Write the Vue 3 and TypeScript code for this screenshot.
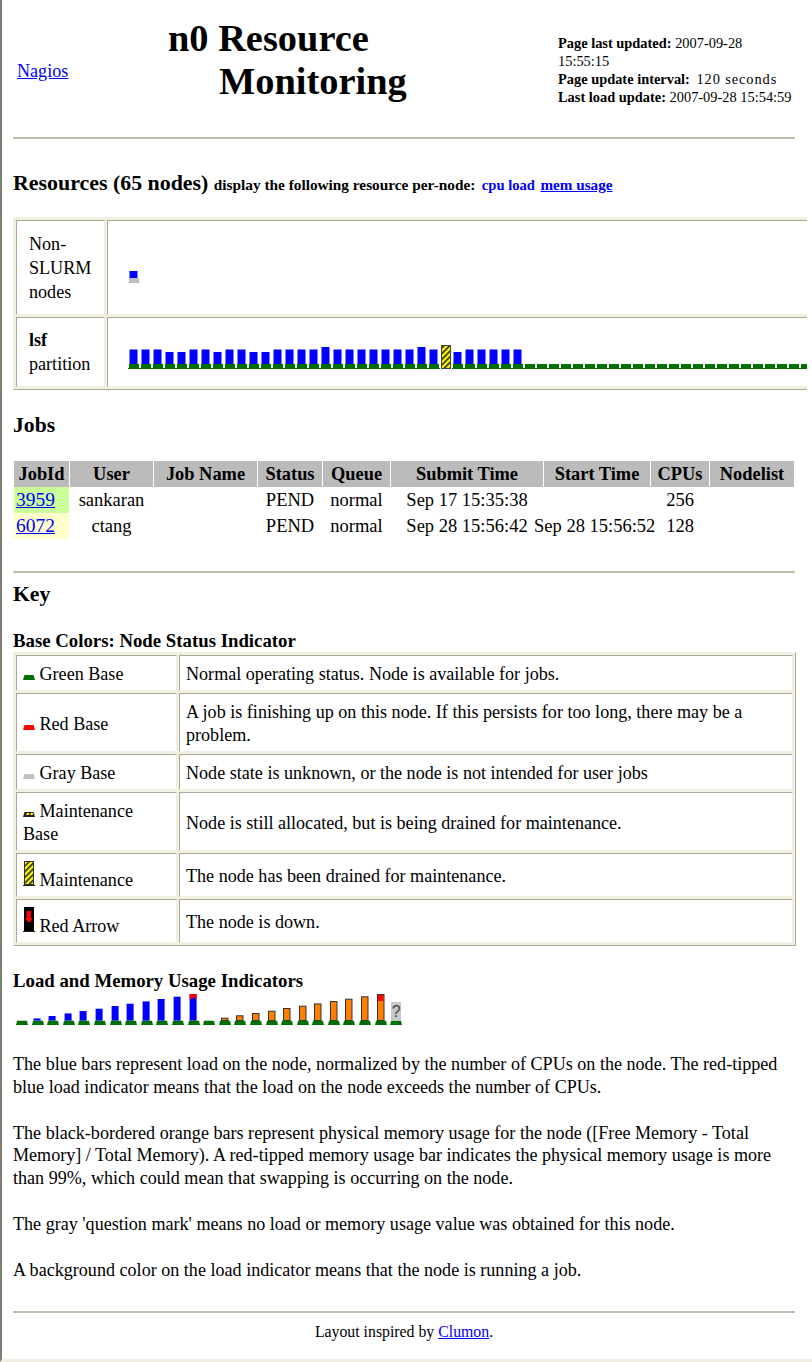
<script setup lang="ts">
type Kind = 'T' | 'S' | 'H' | 'M' | 'E';
const head = 'TTTSSTTSTTSSTTTTHTTTTTTTHTMSTTTTT';
const lsf: Kind[] = [...(head.split('') as Kind[]), ...Array<Kind>(26).fill('E')];
const heights: Record<string, number> = { T: 14.5, S: 12, H: 17 };
const load = [0, 2.3, 4.7, 7.3, 9.7, 12, 14.7, 17, 19.3, 21.7, 24, 26.7];
const mem = [0, 2.3, 4.7, 7, 9.3, 12, 14.3, 16.6, 19, 21.3, 23.7, 26];
const cols = ['JobId', 'User', 'Job Name', 'Status', 'Queue', 'Submit Time', 'Start Time', 'CPUs', 'Nodelist'];
const basePath = 'M1 21H11V25H12V26H0V25H1Z';
const legendBase = 'M1 27.7H11L12 32H0Z';
const iconBase = 'M1.5 0H10.5L12 5H0Z';
</script>

<template>
  <div class="page">
    <header class="top">
      <a class="nagios" href="#">Nagios</a>
      <h1 class="title"><span class="t1">n0 Resource</span><span class="t2">Monitoring</span></h1>
      <div class="meta">
        <b>Page last updated:</b> 2007-09-28<br />15:55:15<br />
        <b>Page update interval:</b> <span class="wide">120 seconds</span><br />
        <b>Last load update:</b> 2007-09-28 15:54:59
      </div>
    </header>
    <hr class="rule" />
    <h2 class="res">Resources (65 nodes) <small>display the following resource per-node:</small> <span class="sel">cpu load</span> <a class="lnk" href="#">mem usage</a></h2>

    <div class="clip">
      <table class="grid res-table">
        <tbody>
          <tr class="r1">
            <td class="lab">Non-SLURM nodes</td>
            <td class="nodes">
              <div class="row single">
                <svg width="12" height="12" class="node"><rect x="1.5" y="0" width="8" height="7" fill="#0000ff" /><path d="M1 7H11V11H12V12H0V11H1Z" fill="#c0c0c0" /></svg>
              </div>
            </td>
          </tr>
          <tr class="r2">
            <td class="lab"><b>lsf</b><br />partition</td>
            <td class="nodes">
              <div class="row">
                <svg v-for="(k, i) in lsf" :key="i" width="12" height="26" class="node">
                  <template v-if="k === 'M'">
                    <defs><pattern id="hatch" width="4" height="4" patternUnits="userSpaceOnUse" patternTransform="rotate(45)"><rect width="4" height="4" fill="#ffff00" /><rect width="1.6" height="4" fill="#222" /></pattern></defs>
                    <rect x="1.5" y="2.5" width="9" height="23" fill="url(#hatch)" stroke="#444" />
                  </template>
                  <template v-else>
                    <rect v-if="k !== 'E'" x="1.5" :y="21 - heights[k]" width="8" :height="heights[k]" fill="#0000ff" />
                    <path :d="basePath" fill="#007000" />
                  </template>
                </svg>
              </div>
            </td>
          </tr>
        </tbody>
      </table>
    </div>

    <h2 class="sec jobs-h">Jobs</h2>
    <table class="jobs">
      <thead>
        <tr><th v-for="c in cols" :key="c">{{ c }}</th></tr>
      </thead>
      <tbody>
        <tr>
          <td class="id green"><a href="#">3959</a></td><td class="c">sankaran</td><td></td><td class="c">PEND</td><td class="c">normal</td><td class="c">Sep 17 15:35:38</td><td class="c"></td><td class="c">256</td><td></td>
        </tr>
        <tr>
          <td class="id yellow"><a href="#">6072</a></td><td class="c">ctang</td><td></td><td class="c">PEND</td><td class="c">normal</td><td class="c">Sep 28 15:56:42</td><td class="start"><span>Sep 28 15:56:52</span></td><td class="c">128</td><td></td>
        </tr>
      </tbody>
    </table>
    <hr class="rule second" />
    <h2 class="sec key-h">Key</h2>
    <h3 class="sub">Base Colors: Node Status Indicator</h3>
    <table class="grid key">
      <tbody>
        <tr><td class="k"><svg width="12" height="5" class="ic"><path :d="iconBase" fill="#007000" /></svg> Green Base</td><td>Normal operating status. Node is available for jobs.</td></tr>
        <tr><td class="k"><svg width="12" height="5" class="ic"><path :d="iconBase" fill="#ff0000" /></svg> Red Base</td><td>A job is finishing up on this node. If this persists for too long, there may be a problem.</td></tr>
        <tr><td class="k"><svg width="12" height="5" class="ic"><path :d="iconBase" fill="#c0c0c0" /></svg> Gray Base</td><td>Node state is unknown, or the node is not intended for user jobs</td></tr>
        <tr><td class="k"><svg width="12" height="5" class="ic"><path :d="iconBase" fill="#222" /><path d="M4 1H6.5L5.5 3H3ZM8 1H10.5L9.5 3H7Z" fill="#ffff00" /></svg> Maintenance Base</td><td>Node is still allocated, but is being drained for maintenance.</td></tr>
        <tr><td class="k"><svg width="12" height="25" class="ic"><defs><pattern id="hatch2" width="4" height="4" patternUnits="userSpaceOnUse" patternTransform="rotate(45)"><rect width="4" height="4" fill="#ffff00" /><rect width="1.6" height="4" fill="#222" /></pattern></defs><rect x="1.5" y=".5" width="9" height="23" fill="url(#hatch2)" stroke="#333" /><rect y="24" width="12" height="1" fill="#222" /></svg> Maintenance</td><td>The node has been drained for maintenance.</td></tr>
        <tr><td class="k"><svg width="12" height="25" class="ic"><rect x="1" width="10" height="24" fill="#000" /><rect y="24" width="12" height="1" fill="#222" /><path d="M3.5 4H8V11H10L5.8 16L1.8 11H3.5Z" fill="#ff0000" /></svg> Red Arrow</td><td>The node is down.</td></tr>
      </tbody>
    </table>

    <h3 class="sub load-h">Load and Memory Usage Indicators</h3>
    <div class="legend">
      <svg v-for="(h, i) in load" :key="'l' + i" width="15.6" height="32" class="node">
        <rect v-if="h" x="1.6" :y="27.7 - h" width="7" :height="h" fill="#0000ff" />
        <path v-if="i === 11" d="M1.6 1H8.6V7L5.1 4L1.6 7Z" fill="#ff0000" />
        <path :d="legendBase" fill="#007000" />
      </svg>
      <svg v-for="(h, i) in mem" :key="'m' + i" width="15.6" height="32" class="node">
        <rect v-if="h" x="2.5" :y="27.5 - h" width="6.5" :height="h" fill="#ff8000" stroke="#333" />
        <rect v-if="i === 11" x="3" y="2" width="5.5" height="6" fill="#ff0000" />
        <path :d="legendBase" fill="#007000" />
      </svg>
      <div class="q">
        <span>?</span>
        <svg width="12" height="4.3" class="node"><path d="M1 0H11L12 4.3H0Z" fill="#007000" /></svg>
      </div>
    </div>

    <p class="para">The blue bars represent load on the node, normalized by the number of CPUs on the node. The red-tipped blue load indicator means that the load on the node exceeds the number of CPUs.</p>
    <p class="para">The black-bordered orange bars represent physical memory usage for the node ([Free Memory - Total Memory] / Total Memory). A red-tipped memory usage bar indicates the physical memory usage is more than 99%, which could mean that swapping is occurring on the node.</p>
    <p class="para">The gray 'question mark' means no load or memory usage value was obtained for this node.</p>
    <p class="para">A background color on the load indicator means that the node is running a job.</p>
    <hr class="rule third" />
    <p class="foot">Layout inspired by <a href="#">Clumon</a>.</p>
  </div>
</template>

<style>
html, body { margin: 0; padding: 0; background: #fff; overflow: hidden; }
</style>

<style scoped>
.page {
  box-sizing: border-box;
  width: 812px;
  height: 1362px;
  overflow: hidden;
  padding: 0 17px 0 11px;
  border-left: 2px solid #807f74;
  border-bottom: 3px solid #f1efe2;
  font: 18.1px/23px "Liberation Serif", serif;
  color: #000;
  background: #fff;
}
a { color: #0000ff; text-decoration: underline; }
.top { display: flex; align-items: flex-start; height: 137px; }
.nagios { width: 155px; padding: 60px 0 0 4px; box-sizing: border-box; flex: none; }
.title { margin: 17px 0 0; width: 390px; flex: none; font-size: 38.4px; line-height: 43px; font-weight: bold; }
.t1, .t2 { display: block; }
.t2 { padding-left: 51px; }
.meta { margin-top: 34px; font-size: 14.4px; line-height: 18px; width: 237px; flex: none; white-space: nowrap; }
.wide { letter-spacing: .9px; margin-left: 3px; }
.rule { height: 2px; margin: 0; border: 0; background: #c0bfae; }
.res { margin: 32px 0 0; font-size: 21.9px; line-height: 24px; font-weight: bold; white-space: nowrap; }
.res small { font-size: 15.3px; }
.sel { font-size: 14.6px; color: #0000ff; margin-left: 1px; }
.lnk { font-size: 15.2px; }
.clip { margin-top: 20px; width: 794px; overflow: hidden; }
.grid { border-collapse: separate; border-spacing: 2px; border: 1px solid; border-color: #f1efe2 #aca899 #aca899 #f1efe2; background: #f1efe2; box-sizing: border-box; }
.grid td { background: #fff; border: 1px solid; border-color: #aca899 #f1efe2 #f1efe2 #aca899; box-sizing: border-box; }
.res-table { width: 850px; table-layout: fixed; }
.grid .lab { width: 89px; padding: 0 4px 0 12px; vertical-align: middle; line-height: 24px; }
.nodes { padding: 0 0 0 19.5px; overflow: hidden; }
.r1 td { height: 95px; }
.r2 td { height: 70px; }
.row { display: flex; align-items: flex-end; width: 800px; height: 34px; }
.single { height: 31px; }
.node { flex: none; display: block; }
.sec { margin: 0; font-size: 21.7px; line-height: 24px; font-weight: bold; }
.jobs-h { margin-top: 23px; }
.jobs { margin-top: 24px; border-collapse: separate; border-spacing: 1px 0; table-layout: fixed; width: 782px; }
.jobs th { background: #bbb; font-size: 18.4px; line-height: 26px; padding: 0; }
.jobs th:nth-child(1) { width: 55px; }
.jobs th:nth-child(2) { width: 83px; }
.jobs th:nth-child(3) { width: 103px; }
.jobs th:nth-child(4) { width: 64px; }
.jobs th:nth-child(5) { width: 67px; }
.jobs th:nth-child(6) { width: 152px; }
.jobs th:nth-child(7) { width: 106px; }
.jobs th:nth-child(8) { width: 58px; }
.jobs td { line-height: 26px; padding: 0; white-space: nowrap; font-size: 18.5px; }
.jobs td.c { text-align: center; }
.jobs .start span { margin-left: -10px; }
.jobs td.id { padding-left: 2px; font-size: 19.5px; }
.green { background: #ccff99; }
.yellow { background: #ffffcc; }
.second { margin-top: 32px; }
.key-h { margin-top: 9px; }
.sub { margin: 25px 0 0; font-size: 18.8px; line-height: 20px; font-weight: bold; }
.key { width: 783px; margin-top: 1px; table-layout: fixed; }
.key td { padding: 7px 6px 4px; line-height: 23px; }
.key td.k { width: 161px; padding-right: 12px; }
.ic { vertical-align: baseline; }
.load-h { margin-top: 25px; }
.legend { display: flex; align-items: flex-end; height: 32px; margin: 2px 0 0 3px; }
.q { width: 12px; height: 32px; display: flex; flex-direction: column; justify-content: flex-end; }
.q span { height: 19px; margin: 0 0 0 1px; width: 10px; background: #c8c8c8; font: 16px/19px "Liberation Sans", sans-serif; text-align: center; color: #444; }
.para { margin: 0 0 23px; line-height: 22.8px; }
.legend + .para { margin-top: 28px; }
.third { margin-top: 29px; }
.foot { margin: 8px 0 0; text-align: center; font-size: 15.8px; line-height: 22px; }
</style>
